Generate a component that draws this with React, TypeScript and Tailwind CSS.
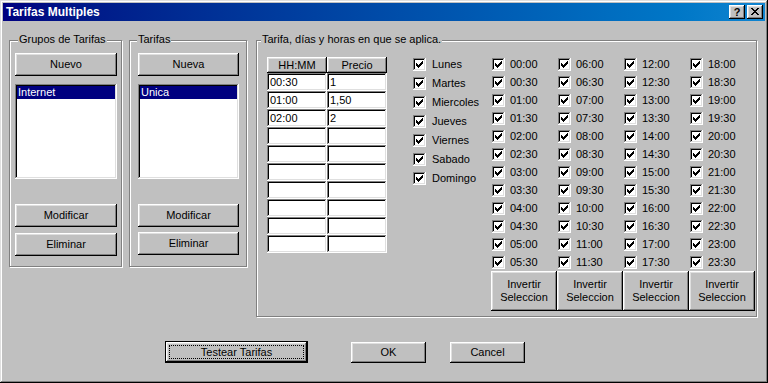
import type { ReactNode } from "react";

const RAISED =
  "bg-[#c0c0c0] shadow-[inset_-1px_-1px_#000,inset_1px_1px_#fff,inset_-2px_-2px_#808080,inset_2px_2px_#dfdfdf]";
const SUNKEN =
  "bg-white shadow-[inset_-1px_-1px_#fff,inset_1px_1px_#808080,inset_-2px_-2px_#dfdfdf,inset_2px_2px_#000]";

const HOURS = Array.from({ length: 48 }, (_, i) => {
  const h = String(Math.floor(i / 2)).padStart(2, "0");
  return `${h}:${i % 2 ? "30" : "00"}`;
});

const DAYS = ["Lunes", "Martes", "Miercoles", "Jueves", "Viernes", "Sabado", "Domingo"];

const RATES: [string, string][] = [
  ["00:30", "1"],
  ["01:00", "1,50"],
  ["02:00", "2"],
  ["", ""],
  ["", ""],
  ["", ""],
  ["", ""],
  ["", ""],
  ["", ""],
  ["", ""],
];

function Button(props: { children: ReactNode; className?: string }) {
  return (
    <div className={`flex items-center justify-center text-center ${RAISED} ${props.className ?? ""}`}>
      {props.children}
    </div>
  );
}

function Check() {
  return (
    <span className={`flex h-[13px] w-[13px] shrink-0 pl-[3px] pt-[3px] ${SUNKEN}`}>
      <svg width="7" height="7" viewBox="0 0 7 7" shapeRendering="crispEdges">
        <path d="M0 2h1v3H0zM1 3h1v3H1zM2 4h1v3H2zM3 3h1v3H3zM4 2h1v3H4zM5 1h1v3H5zM6 0h1v3H6z" fill="#000" />
      </svg>
    </span>
  );
}

function Group(props: { label: string; labelLeft: string; className: string; children: ReactNode }) {
  return (
    <div className={`relative border border-[#808080] shadow-[inset_1px_1px_#fff,1px_1px_#fff] ${props.className}`}>
      <span className={`absolute -top-[9px] ${props.labelLeft} bg-[#c0c0c0] px-[1px] leading-[14px]`}>
        {props.label}
      </span>
      {props.children}
    </div>
  );
}

function ListBox(props: { item: string }) {
  return (
    <div className={`h-[95px] p-[2px] ${SUNKEN}`}>
      <div className="h-[13px] bg-[#000080] pl-[1px] leading-[13px] text-white">{props.item}</div>
    </div>
  );
}

function TitleBar() {
  return (
    <div className="flex h-[18px] items-center bg-gradient-to-r from-[#000080] to-[#1084d0] pl-[3px] pr-[2px]">
      <span className="text-[12px] font-bold leading-[18px] text-white">Tarifas Multiples</span>
      <div className="ml-auto flex gap-[2px]">
        <div className={`flex h-[14px] w-[16px] items-center justify-center text-[11px] font-bold leading-none ${RAISED}`}>
          ?
        </div>
        <div className={`flex h-[14px] w-[16px] items-center justify-center pb-[1px] ${RAISED}`}>
          <svg width="8" height="7" viewBox="0 0 8 7" shapeRendering="crispEdges">
            <path
              d="M0 0h2v1H0zM6 0h2v1H6zM1 1h2v1H1zM5 1h2v1H5zM2 2h4v1H2zM3 3h2v1H3zM2 4h4v1H2zM1 5h2v1H1zM5 5h2v1H5zM0 6h2v1H0zM6 6h2v1H6z"
              fill="#000"
            />
          </svg>
        </div>
      </div>
    </div>
  );
}

export default function App() {
  return (
    <div className="h-[383px] w-[768px] bg-[#c0c0c0] p-[3px] font-[family-name:'Liberation_Sans',Arial,sans-serif] text-[11px] text-black shadow-[inset_-1px_-1px_#000,inset_1px_1px_#dfdfdf,inset_-2px_-2px_#808080,inset_2px_2px_#fff]">
      <TitleBar />

      <div className="flex items-start pt-[19px]">
        <Group label="Grupos de Tarifas" labelLeft="left-[8px]" className="ml-[6px] h-[227px] w-[113px] pl-[5px] pt-[12px]">
          <div className="w-[102px]">
            <Button className="h-[23px]">Nuevo</Button>
            <div className="mt-[8px]">
              <ListBox item="Internet" />
            </div>
            <Button className="mt-[25px] h-[23px]">Modificar</Button>
            <Button className="mt-[6px] h-[23px]">Eliminar</Button>
          </div>
        </Group>

        <Group label="Tarifas" labelLeft="left-[7px]" className="ml-[7px] h-[227px] w-[118px] pl-[8px] pt-[12px]">
          <div className="w-[101px]">
            <Button className="h-[23px]">Nueva</Button>
            <div className="mt-[8px]">
              <ListBox item="Unica" />
            </div>
            <Button className="mt-[25px] h-[23px]">Modificar</Button>
            <Button className="mt-[5px] h-[23px]">Eliminar</Button>
          </div>
        </Group>

        <Group
          label="Tarifa, días y horas en que se aplica."
          labelLeft="left-[4px]"
          className="ml-[9px] flex h-[277px] w-[501px] items-start"
        >
          <div className="ml-[10px] mt-[16px] w-[120px]">
            <div className="flex h-[16px]">
              <Button className="w-[60px] leading-[16px]">HH:MM</Button>
              <Button className="w-[60px] leading-[16px]">Precio</Button>
            </div>
            {RATES.map(([t, p], i) => (
              <div key={i} className="flex h-[18px]">
                <div className={`w-[60px] pl-[3px] pt-[2px] leading-[15px] ${SUNKEN}`}>{t}</div>
                <div className={`w-[60px] pl-[3px] pt-[2px] leading-[15px] ${SUNKEN}`}>{p}</div>
              </div>
            ))}
          </div>

          <div className="ml-[26px] mt-[14px] w-[78px]">
            {DAYS.map((d) => (
              <div key={d} className="flex h-[19px] items-center gap-[6px]">
                <Check />
                <span>{d}</span>
              </div>
            ))}
          </div>

          <div className="mt-[14px] w-[264px]">
            <div className="flex">
              {[0, 1, 2, 3].map((c) => (
                <div key={c} className="w-[66px] pl-[1px]">
                  {HOURS.slice(c * 12, c * 12 + 12).map((h) => (
                    <div key={h} className="flex h-[18px] items-center gap-[5px]">
                      <Check />
                      <span>{h}</span>
                    </div>
                  ))}
                </div>
              ))}
            </div>
            <div className="flex">
              {[0, 1, 2, 3].map((c) => (
                <Button key={c} className="h-[40px] w-[66px] leading-[13px]">
                  Invertir
                  <br />
                  Seleccion
                </Button>
              ))}
            </div>
          </div>
        </Group>
      </div>

      <div className="mt-[24px] flex items-end">
        <div className="ml-[162px] h-[22px] w-[143px] border border-black">
          <div className={`h-full w-full p-[3px] ${RAISED}`}>
            <div className="flex h-full w-full items-center justify-center border border-dotted border-black">
              Testear Tarifas
            </div>
          </div>
        </div>
        <Button className="ml-[43px] h-[21px] w-[75px]">OK</Button>
        <Button className="ml-[24px] h-[21px] w-[75px]">Cancel</Button>
      </div>
    </div>
  );
}
